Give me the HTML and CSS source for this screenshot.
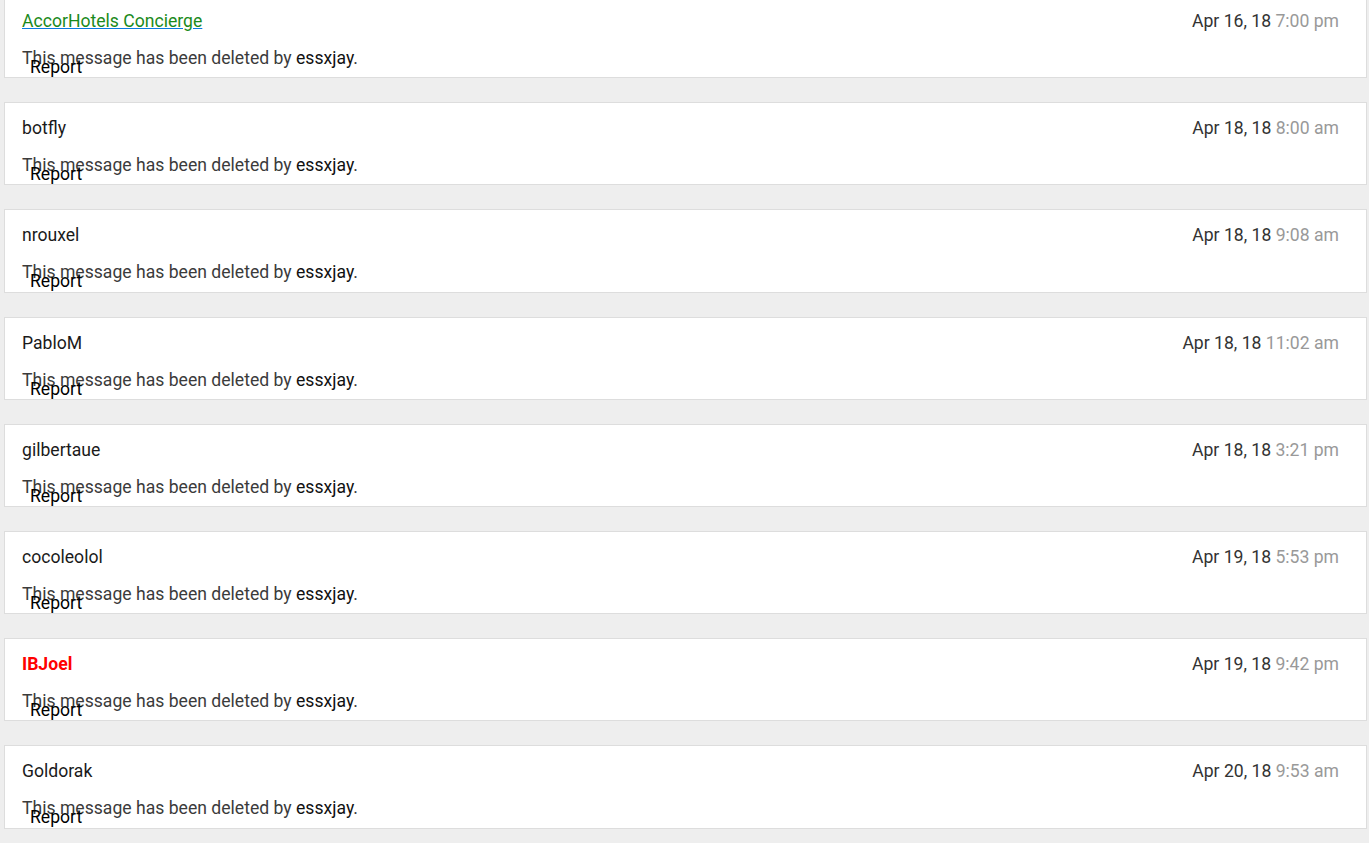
FILE: index.html
```html
<!DOCTYPE html>
<html>
<head>
<meta charset="utf-8">
<link rel="stylesheet" href="styles.css">
</head>
<body>
<div class="thread">
  <div class="post">
    <div class="head"><a class="user-link" href="#"><span class="name-green">AccorHotels Concierge</span></a><span class="date">Apr 16, 18 <span class="time">7:00 pm</span></span></div>
    <div class="msg">This message has been deleted by <span class="by">essxjay</span>.</div>
    <span class="report">Report</span>
  </div>
  <div class="post">
    <div class="head"><span class="name">botfly</span><span class="date">Apr 18, 18 <span class="time">8:00 am</span></span></div>
    <div class="msg">This message has been deleted by <span class="by">essxjay</span>.</div>
    <span class="report">Report</span>
  </div>
  <div class="post">
    <div class="head"><span class="name">nrouxel</span><span class="date">Apr 18, 18 <span class="time">9:08 am</span></span></div>
    <div class="msg">This message has been deleted by <span class="by">essxjay</span>.</div>
    <span class="report">Report</span>
  </div>
  <div class="post">
    <div class="head"><span class="name">PabloM</span><span class="date">Apr 18, 18 <span class="time">11:02 am</span></span></div>
    <div class="msg">This message has been deleted by <span class="by">essxjay</span>.</div>
    <span class="report">Report</span>
  </div>
  <div class="post">
    <div class="head"><span class="name">gilbertaue</span><span class="date">Apr 18, 18 <span class="time">3:21 pm</span></span></div>
    <div class="msg">This message has been deleted by <span class="by">essxjay</span>.</div>
    <span class="report">Report</span>
  </div>
  <div class="post">
    <div class="head"><span class="name">cocoleolol</span><span class="date">Apr 19, 18 <span class="time">5:53 pm</span></span></div>
    <div class="msg">This message has been deleted by <span class="by">essxjay</span>.</div>
    <span class="report">Report</span>
  </div>
  <div class="post">
    <div class="head"><span class="name name-red">IBJoel</span><span class="date">Apr 19, 18 <span class="time">9:42 pm</span></span></div>
    <div class="msg">This message has been deleted by <span class="by">essxjay</span>.</div>
    <span class="report">Report</span>
  </div>
  <div class="post">
    <div class="head"><span class="name">Goldorak</span><span class="date">Apr 20, 18 <span class="time">9:53 am</span></span></div>
    <div class="msg">This message has been deleted by <span class="by">essxjay</span>.</div>
    <span class="report">Report</span>
  </div>
</div>
</body>
</html>
```
FILE: styles.css
```css
html, body {
  margin: 0;
  padding: 0;
  background: #eeeeee;
  font-family: Roboto, "Liberation Sans", sans-serif;
  font-size: 17.6px;
}
.thread {
  display: flex;
  flex-direction: column;
  gap: 23.9px;
  margin-top: -5px;
  padding-left: 4px;
  padding-right: 2px;
}
.post {
  position: relative;
  background: #ffffff;
  border: 1px solid #dddddd;
  height: 81.3px;
  box-sizing: content-box;
  padding: 0 27px 0 17px;
}
.head {
  display: flex;
  justify-content: space-between;
  align-items: center;
  height: 20px;
  line-height: 20px;
  margin-top: 15px;
}
.name {
  color: #1a1a1a;
}
.name-red {
  color: #ff0000;
  font-weight: bold;
}
.user-link {
  color: #0a7be0;
  text-decoration: underline;
}
.name-green {
  color: #1b8a1b;
}
.date {
  color: #333333;
}
.time {
  color: #999999;
}
.msg {
  margin-top: 17px;
  line-height: 20px;
  color: #3b3b3b;
}
.by {
  color: #111111;
}
.report {
  position: absolute;
  left: 25px;
  top: 61px;
  line-height: 20px;
  color: #000000;
}
```
